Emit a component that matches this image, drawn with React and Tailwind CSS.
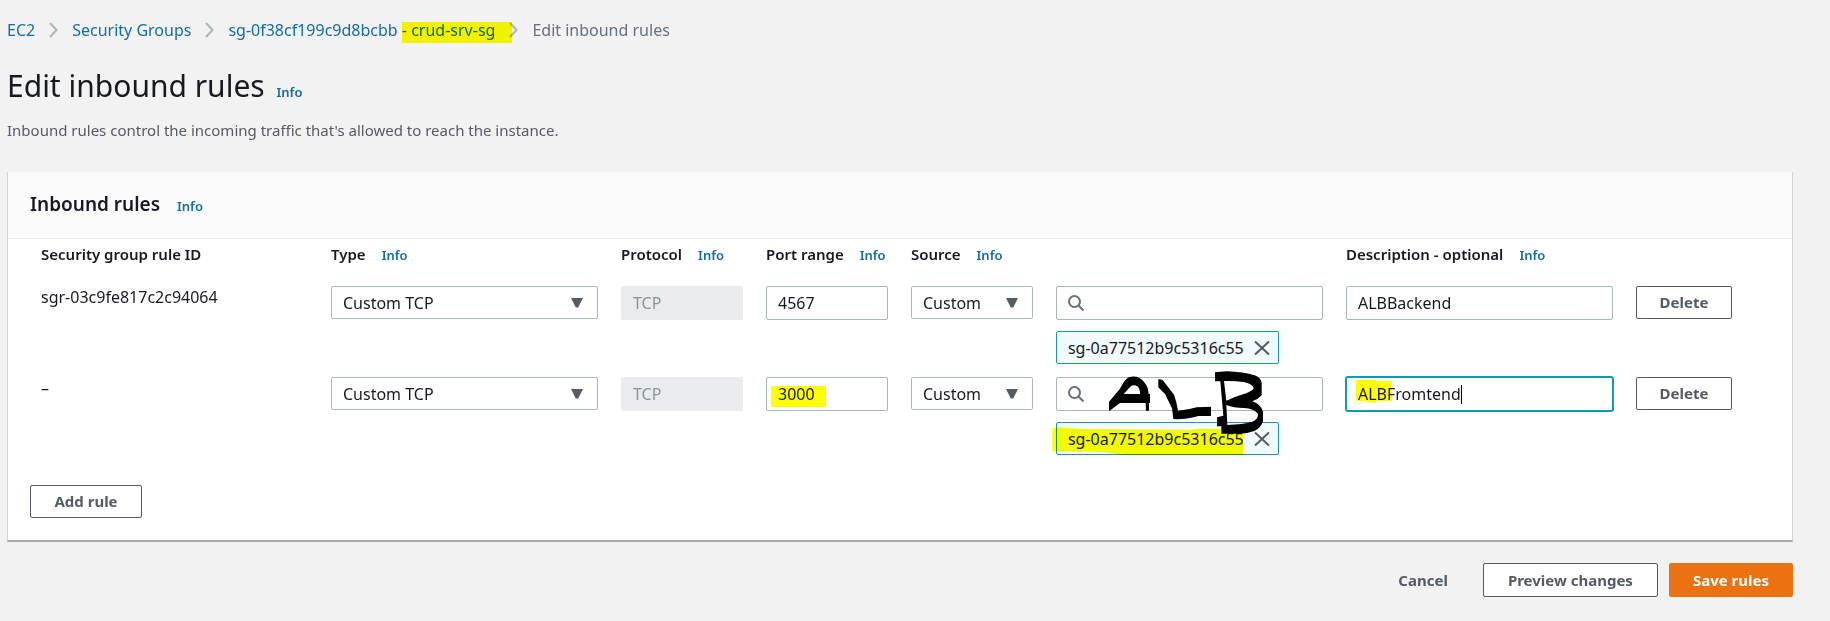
const marker = "pointer-events-none absolute mix-blend-multiply";
const controlBase = "block w-full rounded-xs border bg-white px-[11px] text-base text-[#16191f]";
const control = `${controlBase} border-[#aab7b8]`;
const activeControl = `${controlBase} border-[#0a9bb8] ring-1 ring-[#0a9bb8]`;
const outlineButton =
  "h-[33px] rounded-xs border border-[#545b64] bg-white text-[15px] font-bold text-[#545b64]";

function Info({ className = "" }) {
  return (
    <a href="#info" className={`text-[13px] font-semibold text-[#126bb0] ${className}`}>
      Info
    </a>
  );
}

function Chevron() {
  return (
    <svg aria-hidden="true" viewBox="0 0 9 16" className="h-4 w-[9px] fill-none stroke-[#aab7b8] stroke-2">
      <path d="M1 1l6.5 7L1 15" />
    </svg>
  );
}

function Breadcrumbs() {
  return (
    <nav aria-label="Breadcrumb">
      <ol className="flex items-center gap-[14px] text-base leading-5 text-[#126bb0]">
        <li><a href="#ec2">EC2</a></li>
        <li><Chevron /></li>
        <li><a href="#groups">Security Groups</a></li>
        <li><Chevron /></li>
        <li>
          <a href="#group">
            sg-0f38cf199c9d8bcbb{" "}
            <span className="relative">
              - crud-srv-sg
              <span className={`${marker} -right-[17px] left-0 top-[3px] h-[21px] bg-[#ffff00]`} />
            </span>
          </a>
        </li>
        <li><Chevron /></li>
        <li className="text-[#687078]" aria-current="page">Edit inbound rules</li>
      </ol>
    </nav>
  );
}

function Select({ label, value }) {
  return (
    <div className="relative">
      <select aria-label={label} defaultValue={value} className={`${control} h-[33px] appearance-none`}>
        <option>{value}</option>
      </select>
      <svg aria-hidden="true" viewBox="0 0 12 10" className="pointer-events-none absolute right-[15px] top-3 h-[10px] w-3 fill-[#545b64]">
        <path d="M0 0h12L7.2 9.5H4.8z" />
      </svg>
    </div>
  );
}

function SourceSearch() {
  return (
    <div className="relative">
      <input type="search" aria-label="Source" className={`${control} h-[34px] pl-10`} />
      <svg aria-hidden="true" viewBox="0 0 16 16" className="pointer-events-none absolute left-3 top-[9px] size-4 fill-none stroke-[#687078] stroke-2">
        <circle cx="6.5" cy="6.5" r="5.5" />
        <path d="M10.3 10.3L15.5 15.5" />
      </svg>
    </div>
  );
}

function Token({ children }) {
  return (
    <div className="mt-[11px] flex h-[33px] w-[223px] items-center justify-between rounded-xs border border-[#1a93bb] bg-[#f1faff] pl-[11px] pr-2 text-base text-[#16191f]">
      {children}
      <button type="button" aria-label={`Remove ${children}`}>
        <svg viewBox="0 0 16 16" className="size-4 fill-none stroke-[#545b64] stroke-2">
          <path d="M1 1.5l14 13M15 1.5l-14 13" />
        </svg>
      </button>
    </div>
  );
}

function Handwriting() {
  return (
    <>
      <svg aria-hidden="true" viewBox="36 200 573 84" className={`${marker} -left-1 top-[50px] h-7 w-[191px] fill-[#ffff00]`}>
        <path d="M37 204L60 201L120 206L450 208L480 205L609 207V284H262Q200 277 185 275L37 273Z" />
      </svg>
      <svg aria-hidden="true" viewBox="198 30 486 201" className="pointer-events-none absolute -top-[7px] left-[50px] h-[67px] w-[162px] fill-black" fillRule="evenodd">
        <path d="M207 125L240 86Q255 56 268 51Q285 47 298 54Q314 63 323 84L326 102H330V129H327V152H318L317 129H240L207 154ZM251 102H300Q301 88 292 79Q280 72 271 80Z" />
        <path d="M355 57L368 60L402 104Q410 125 414 152Q445 150 470 142L513 140V168H475Q430 180 400 177L396 145L375 102L355 82Z" />
        <path d="M525 37L560 34Q610 36 644 46Q662 53 665 68V106Q654 118 637 124Q663 133 669 155V184Q663 204 643 213Q615 223 590 221H544V199H531V172L550 167L541 64H525ZM552 63L559 122Q580 111 605 104Q630 96 641 86Q640 72 612 66Q580 62 552 63ZM559 135L562 195Q610 193 635 186Q656 177 654 162Q642 145 612 144Q580 144 559 135Z" />
      </svg>
    </>
  );
}

const columns = [
  ["Security group rule ID", false, "w-1/6"],
  ["Type", true, "w-1/6"],
  ["Protocol", true, "w-1/12"],
  ["Port range", true, "w-1/12"],
  ["Source", true, "w-1/12"],
  ["", false, "w-1/6"],
  ["Description - optional", true, "w-1/6"],
  ["", false, "w-1/12"],
];

const rules = [
  { id: "sgr-03c9fe817c2c94064", port: "4567", description: "ALBBackend", marked: false },
  { id: "–", port: "3000", description: "ALBFromtend", marked: true },
];

function RuleRow({ rule }) {
  const cell = "p-0 pb-[13px] pr-[23px] align-top";
  return (
    <tr>
      <td className={`${cell} text-base leading-[22px] text-[#16191f]`}>{rule.id}</td>
      <td className={cell}><Select label="Type" value="Custom TCP" /></td>
      <td className={cell}>
        <input aria-label="Protocol" disabled defaultValue="TCP" className="block h-[34px] w-full rounded-xs bg-[#eaebec] px-3 text-base text-[#879596]" />
      </td>
      <td className={cell}>
        <div className="relative">
          <input aria-label="Port range" defaultValue={rule.port} className={`${control} h-[34px]`} />
          {rule.marked && <span className={`${marker} left-[5px] top-[9px] h-[21px] w-[55px] bg-[#ffff00]`} />}
        </div>
      </td>
      <td className={cell}><Select label="Source type" value="Custom" /></td>
      <td className={cell}>
        <div className="relative">
          <SourceSearch />
          <Token>sg-0a77512b9c5316c55</Token>
          {rule.marked && <Handwriting />}
        </div>
      </td>
      <td className={cell}>
        <div className="relative">
          <input
            aria-label="Description"
            defaultValue={rule.description}
            className={`${rule.marked ? activeControl : control} h-[34px]`}
          />
          {rule.marked && (
            <>
              <svg aria-hidden="true" viewBox="0 0 36 23" className={`${marker} left-[10px] top-[3px] h-[23px] w-9 fill-[#ffff00]`}>
                <path d="M0 0H20V1H36V21H20V23L10 22V21H0Z" />
              </svg>
              <span className="pointer-events-none absolute inset-y-0 left-3 flex items-center text-base">
                <span className="invisible" aria-hidden="true">{rule.description}</span>
                <span className="h-[19px] w-px bg-black" />
              </span>
            </>
          )}
        </div>
      </td>
      <td className={cell}>
        <button type="button" className={`${outlineButton} w-24`}>Delete</button>
      </td>
    </tr>
  );
}

export default function App() {
  return (
    <div className="min-h-screen bg-[#f2f2f2] pb-6 pl-[7px] pr-[37px] pt-5 font-['Noto_Sans',sans-serif] text-[#16191f]">
      <Breadcrumbs />
      <header className="mt-6">
        <h1 className="text-[30px] leading-[44px]">
          Edit inbound rules <Info className="ml-1" />
        </h1>
        <p className="mt-[5px] text-[15px] leading-[22px] text-[#545b64]">
          Inbound rules control the incoming traffic that's allowed to reach the instance.
        </p>
      </header>

      <main className="mt-[31px] border-b-2 border-l border-r border-b-[#a3abad] border-l-[#cfd3d4] border-r-[#cfd3d4] bg-white">
        <div className="flex h-[67px] items-center border-b border-[#eaeded] bg-[#fafafa] pl-[22px]">
          <h2 className="text-[19px] font-semibold leading-[26px]">
            Inbound rules <Info className="ml-3" />
          </h2>
        </div>
        <div className="pl-[33px] pr-[11px]">
          <table className="w-full table-fixed border-collapse">
            <thead>
              <tr>
                {columns.map(([name, info, width], i) => (
                  <th key={i} scope="col" className={`${width} h-[47px] whitespace-nowrap p-0 pt-[3px] text-left align-top text-[15px] font-semibold leading-6`}>
                    {name}
                    {info && <Info className="ml-4" />}
                  </th>
                ))}
              </tr>
            </thead>
            <tbody>
              {rules.map((rule) => <RuleRow key={rule.port} rule={rule} />)}
            </tbody>
          </table>
        </div>
        <div className="pb-[22px] pl-[22px] pt-[17px]">
          <button type="button" className={`${outlineButton} w-28`}>Add rule</button>
        </div>
      </main>

      <footer className="mt-[21px] flex items-center justify-end gap-[11px]">
        <button type="button" className="mr-6 h-[34px] text-[15px] font-bold text-[#545b64]">Cancel</button>
        <button type="button" className="h-[34px] rounded-xs border border-[#545b64] bg-white px-6 text-[15px] font-bold text-[#545b64]">
          Preview changes
        </button>
        <button type="button" className="h-[34px] rounded-xs bg-[#ec7211] px-6 text-[15px] font-bold text-white">
          Save rules
        </button>
      </footer>
    </div>
  );
}
